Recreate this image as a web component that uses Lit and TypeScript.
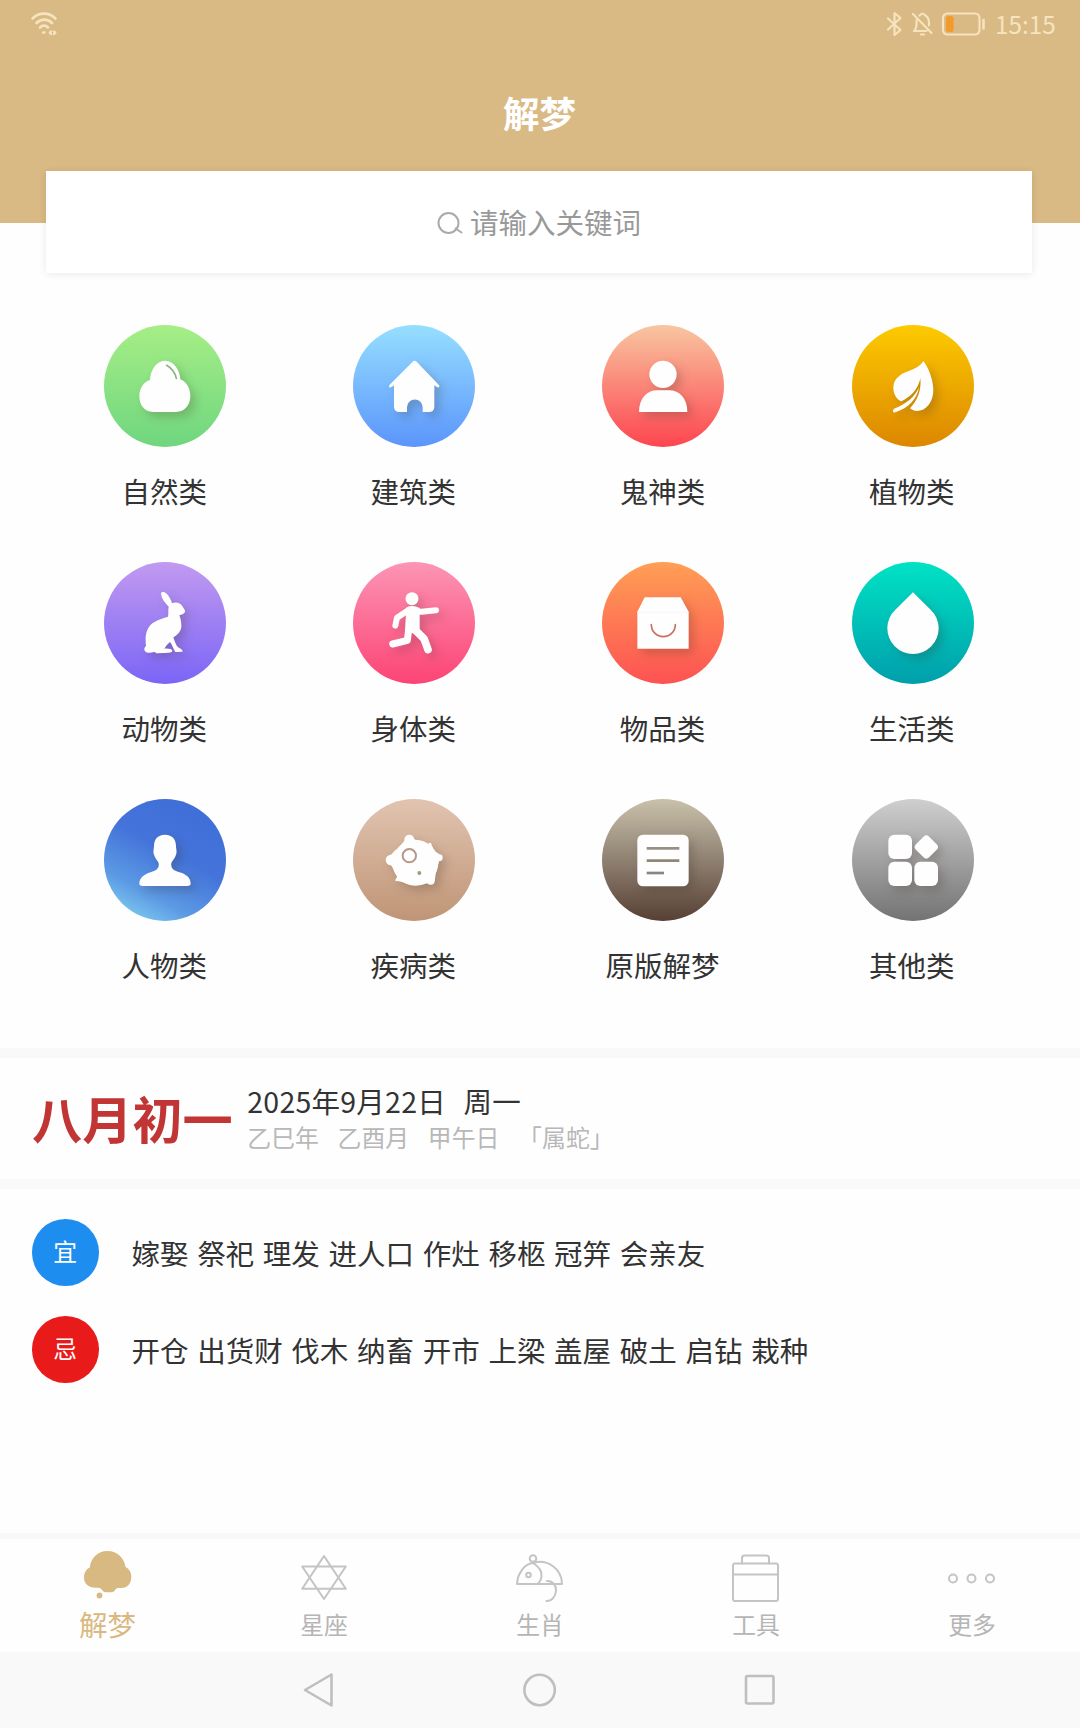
import { LitElement, html, svg, css } from "lit";
import { customElement, property } from "lit/decorators.js";
import { classMap } from "lit/directives/class-map.js";

const white = "#fefefe";

interface Category {
  label: string;
  tone: string;
  icon: unknown;
}

const categories: Category[] = [
  {
    label: "自然类",
    tone: "nature",
    icon: svg`
      <path fill=${white} d="M146 261C120 261 106 238 106 214C106 188 121 170 138 165C139 136 157 107 183 107C210 107 228 136 229 163C247 170 259 189 259 214C259 240 242 261 216 261Z"/>
      <path fill="none" stroke="#86b67e" stroke-width="5" stroke-linecap="round" d="M188 121C202 129 213 142 217 160"/>`,
  },
  {
    label: "建筑类",
    tone: "building",
    icon: svg`<path fill=${white} d="M179 110q6-5 12 0L257 179q4 5 0 8q-4 2-13-6V245Q244 261 227 261H209V247A23.5 23.5 0 0 0 162 247V261H140Q123 261 123 245V181q-9 8-13 6q-4-3 0-8Z"/>`,
  },
  {
    label: "鬼神类",
    tone: "spirit",
    icon: svg`
      <circle fill=${white} cx="183" cy="148" r="41"/>
      <path fill=${white} d="M111 261C111 220 135 196 165 196H202C232 196 256 220 256 261Z"/>`,
  },
  {
    label: "植物类",
    tone: "plant",
    icon: svg`
      <path fill=${white} d="M214 108C228 125 244 163 244 195C244 232 222 258 195 258C188 258 180 255 174 250C196 228 209 195 205 160C199 192 176 216 148 229C133 222 124 206 124 188C124 160 150 145 168 139C190 131 206 122 214 108Z"/>
      <path fill=${white} d="M201 186C190 214 165 236 126 251Q121 256 124 262Q128 263 134 260C168 249 196 222 201 186Z"/>`,
  },
  {
    label: "动物类",
    tone: "animal",
    icon: svg`<path fill=${white} d="M171 92C180 86 191 96 196 106C200 113 203 118 204 124C216 119 230 123 236 134C240 140 244 144 243 150C240 156 232 158 226 160C229 168 233 180 232 196C230 210 218 221 208 226C212 238 216 250 222 256C230 260 236 264 236 269L214 270C208 262 206 250 198 240C191 246 186 252 181 260C194 259 204 261 205 266C204 272 196 272 180 273L160 274C156 275 156 270 150 270C140 274 124 274 121 264C120 258 124 254 126 252C122 220 128 198 145 184C160 173 180 168 192 164C194 152 192 142 194 134C184 122 172 112 171 92Z"/>`,
  },
  {
    label: "身体类",
    tone: "body",
    icon: svg`
      <circle fill=${white} cx="177" cy="110" r="19.5"/>
      <path fill=${white} d="M160 137Q177 126 200 138V203L188 216L156 207Z"/>
      <g fill="none" stroke=${white} stroke-linecap="round" stroke-linejoin="round">
        <path stroke-width="18" d="M180 147L205 149L249 145M168 143L132 167L127 191"/>
        <path stroke-width="21" d="M167 203L163 235L119 246"/>
        <path stroke-width="23" d="M186 203L213 230L225 263"/>
      </g>`,
  },
  {
    label: "物品类",
    tone: "goods",
    icon: svg`
      <path fill=${white} d="M128 106H236L260 149V260H106V149Z"/>
      <path stroke="#f5f1f0" stroke-width="2" d="M106 151H260"/>
      <path fill="none" stroke="#c8705c" stroke-width="5" stroke-linecap="round" d="M148 188A36 36 0 0 0 220 188"/>`,
  },
  {
    label: "生活类",
    tone: "life",
    icon: svg`<path fill=${white} d="M183 91L236 143A77 77 0 1 1 130 143Z"/>`,
  },
  {
    label: "人物类",
    tone: "people",
    icon: svg`<path fill=${white} d="M183 107C206 107 216 122 216 142C216 148 219 156 217 164C214 176 206 184 202 192C200 206 206 214 224 219C246 225 260 236 260 254Q260 260 250 261H116Q106 260 106 254C106 236 122 225 142 219C160 214 166 206 164 192C160 184 152 176 149 164C147 156 150 148 150 142C150 122 160 107 183 107Z"/>`,
  },
  {
    label: "疾病类",
    tone: "illness",
    icon: svg`
      <g fill=${white}>
        <circle cx="187" cy="191" r="69"/>
        <circle cx="169" cy="122" r="15"/>
        <circle cx="114" cy="183" r="16"/>
        <circle cx="259" cy="176" r="10"/>
        <circle cx="233" cy="245" r="12"/>
        <circle cx="131" cy="243" r="4"/>
        <circle cx="231" cy="135" r="4"/>
        <path d="M155 124L184 120L190 128L145 137ZM114 167L130 150L125 216L114 199ZM233 132L244 155L259 166V186L250 210L245 247L205 257ZM129 240L134 228L160 252L134 246Z"/>
      </g>
      <circle fill="none" stroke="#b6978a" stroke-width="6" cx="169" cy="170" r="20"/>
      <circle fill="#a39b7c" cx="199" cy="222" r="6"/>`,
  },
  {
    label: "原版解梦",
    tone: "classic",
    icon: svg`
      <rect fill=${white} x="106" y="107" width="154" height="155" rx="17"/>
      <g stroke-width="8">
        <path stroke="#979087" d="M134 148H232"/>
        <path stroke="#8f8675" d="M134 185H232"/>
        <path stroke="#8c857f" d="M134 222H186"/>
      </g>`,
  },
  {
    label: "其他类",
    tone: "other",
    icon: svg`
      <g fill=${white}>
        <rect x="109" y="107" width="71" height="73" rx="18"/>
        <rect x="109" y="188" width="71" height="73" rx="18"/>
        <rect x="187" y="188" width="71" height="73" rx="18"/>
        <rect x="195" y="116" width="56" height="56" rx="12" transform="rotate(45 223 144)"/>
      </g>`,
  },
];

@customElement("category-tile")
class CategoryTile extends LitElement {
  @property({ attribute: false }) item!: Category;

  static styles = css`
    :host {
      display: flex;
      flex-direction: column;
      align-items: center;
      gap: 24px;
    }
    .disc {
      width: 122px;
      height: 122px;
      border-radius: 50%;
    }
    .disc svg {
      display: block;
      width: 122px;
      height: 122px;
      border-radius: 50%;
    }
    .glyph {
      filter: drop-shadow(14px 15px 15px rgba(60, 40, 30, 0.22));
    }
    .label {
      margin-right: 1.6px;
      font-size: 28.5px;
      line-height: 40px;
      color: #333;
      white-space: nowrap;
    }
    .nature { background: linear-gradient(#a6ee86, #6fd67f); }
    .building { background: linear-gradient(#96dfff, #5b95fb); }
    .spirit { background: linear-gradient(#f8c6a0, #fd4550); }
    .plant { background: linear-gradient(#fdca00, #dc8700); }
    .animal { background: linear-gradient(#c19af0, #7b65f6); }
    .body { background: linear-gradient(#fc95b5, #fc4475); }
    .goods { background: linear-gradient(#ff9f55, #fd5253); }
    .life { background: linear-gradient(#00e2c5, #009fab); }
    .people { background: linear-gradient(28deg, #84d3f1 5%, #5c9ae4 27%, #4474da 55%, #3f6cd8); }
    .illness { background: linear-gradient(#e1c4b0, #bf9576); }
    .classic { background: linear-gradient(#c9c1aa, #8f8172 50%, #573f34); }
    .other { background: linear-gradient(#cfcfcf, #737373); }
  `;

  render() {
    return html`
      <div class=${classMap({ disc: true, [this.item.tone]: true })}>
        <svg viewBox="0 0 366 366"><g class="glyph">${this.item.icon}</g></svg>
      </div>
      <span class="label">${this.item.label}</span>
    `;
  }
}

const tabs = [
  {
    label: "解梦",
    active: true,
    icon: svg`
      <path fill="#d9b982" d="M24.500 1C34.500 1 41.500 8.500 42.500 17C46.500 19 48.500 22.500 48.300 27.500C48 34 44 38 38.500 38C36 38 34.500 38 33.200 38.500C32 40 31.500 41.500 29.500 42.300H22C19.500 41.500 19 39 17.200 38.300C15 37.500 13.500 38 11 37.700C5 37 1 33.500 1 27.500C1 23 3 19 6.800 17.500C7.500 8.500 14.500 1 24.500 1Z"/>
      <circle fill="#d9b982" cx="16.500" cy="45.500" r="2.900"/>`,
  },
  {
    label: "星座",
    icon: svg`<path d="M25 6L46.800 38.800H3.200ZM25 49L3.200 16.500H46.800Z"/>`,
  },
  {
    label: "生肖",
    icon: svg`
      <circle cx="18" cy="8.500" r="3.300"/>
      <circle cx="13.500" cy="25" r="2.300"/>
      <path d="M2 34C2.500 23 10 13.500 18 13C23 16 27 20 26.500 26C26.300 29.500 24.500 32.500 22 34M18 13C32 8 47 19 47 34H2M32 31C38 30.500 41.500 36 41 41C40.500 46.500 37 51 31.500 51"/>`,
  },
  {
    label: "工具",
    icon: svg`
      <rect x="2" y="13.500" width="45" height="37.500" rx="2"/>
      <path d="M2 24.500H47M11 13.500V8Q11 5.500 13.500 5.500H35.500Q38 5.500 38 8V13.500"/>`,
  },
  {
    label: "更多",
    icon: svg`
      <circle cx="6" cy="28.500" r="4"/>
      <circle cx="24.500" cy="28.500" r="4"/>
      <circle cx="43" cy="28.500" r="4"/>`,
  },
];

@customElement("app-root")
class AppRoot extends LitElement {
  static styles = css`
    :host {
      display: flex;
      flex-direction: column;
      width: 1080px;
      height: 1728px;
      overflow: hidden;
      background: #fefefe;
      color: #333;
      font-family: "Noto Sans CJK SC", "Noto Sans", sans-serif;
    }
    .header {
      flex: none;
      height: 222.5px;
      background: #d9b984;
    }
    .status {
      display: flex;
      align-items: center;
      height: 48px;
      padding: 0 25px 0 30px;
      color: #f6e3bf;
    }
    .status svg {
      display: block;
      fill: none;
      stroke: currentColor;
      stroke-width: 2.2;
      stroke-linecap: round;
      stroke-linejoin: round;
    }
    .indicators {
      display: flex;
      align-items: center;
      margin-left: auto;
      gap: 8px;
    }
    .time {
      width: 60px;
      margin-left: 1px;
      font-size: 24.3px;
      line-height: 48px;
      white-space: nowrap;
    }
    .title {
      margin: 0 1px 0 0;
      padding-top: 41px;
      font-size: 36.5px;
      line-height: 48px;
      font-weight: 700;
      text-align: center;
      color: #fff;
    }
    .search {
      flex: none;
      display: flex;
      align-items: center;
      justify-content: center;
      gap: 7px;
      height: 102px;
      margin: -51.5px 48px 0 46px;
      background: #fff;
      box-shadow: 0 1px 8px rgba(0, 0, 0, 0.09);
      font-size: 28.5px;
      color: #999;
    }
    .search svg {
      display: block;
      margin-top: 2px;
    }
    .search span {
      line-height: 40px;
      margin-top: -1px;
    }
    .grid {
      flex: none;
      display: grid;
      grid-template-columns: repeat(4, 249.2px);
      grid-auto-rows: 186px;
      row-gap: 51px;
      height: 723px;
      padding: 52px 0 0 40.4px;
      box-sizing: content-box;
    }
    .rule {
      flex: none;
      height: 10px;
      background: #f9f9f9;
    }
    .calendar {
      flex: none;
      display: flex;
      align-items: center;
      gap: 14.5px;
      height: 121px;
      padding: 0 32px;
      box-sizing: border-box;
    }
    .lunar {
      font-size: 50.2px;
      line-height: 70px;
      font-weight: 700;
      color: #c13535;
      margin-top: -4px;
    }
    .dates {
      display: flex;
      flex-direction: column;
    }
    .solar {
      display: flex;
      gap: 17.5px;
      font-size: 28.5px;
      line-height: 36px;
      letter-spacing: 0.25px;
    }
    .stems {
      display: flex;
      gap: 18.6px;
      font-size: 23.9px;
      line-height: 36px;
      color: #b8b8b8;
    }
    .almanac {
      flex: 1;
      display: flex;
      flex-direction: column;
      gap: 30px;
      padding: 30px 32px 0;
    }
    .advice {
      display: flex;
      align-items: center;
      gap: 33px;
      height: 67px;
      font-size: 28.5px;
      word-spacing: 2.3px;
      white-space: nowrap;
    }
    .advice p {
      margin: 1px 0 0;
      line-height: 40px;
    }
    .badge {
      display: flex;
      align-items: center;
      justify-content: center;
      width: 66.5px;
      height: 66.5px;
      border-radius: 50%;
      color: #fff;
      font-size: 23.8px;
      line-height: 62px;
    }
    .badge span {
      margin-top: -3px;
    }
    .good { background: #1e8df0; }
    .bad { background: #e91a1a; }
    .tabs {
      flex: none;
      display: grid;
      grid-template-columns: repeat(5, 1fr);
      height: 119px;
      box-sizing: border-box;
      border-top: 6px solid #f8f8f8;
    }
    .tab {
      display: flex;
      flex-direction: column;
      align-items: center;
      padding-top: 11px;
      color: #b5b5b5;
      font-size: 23.8px;
      line-height: 36px;
    }
    .tab svg {
      display: block;
      width: 50px;
      height: 54px;
      margin-bottom: 1.5px;
      fill: none;
      stroke: #c4c4c4;
      stroke-width: 2;
      stroke-linejoin: round;
      stroke-linecap: round;
    }
    .tab.active {
      color: #d9b982;
      font-size: 28.5px;
    }
    .tab.active span {
      margin-right: 1px;
    }
    .tab.active svg {
      stroke: none;
    }
    .system {
      flex: none;
      display: flex;
      justify-content: center;
      align-items: center;
      gap: 184px;
      height: 76px;
      background: #f9f9f9;
    }
    .system svg {
      display: block;
      fill: none;
      stroke: #bfbfbf;
      stroke-width: 2.6;
      stroke-linejoin: round;
    }
  `;

  render() {
    return html`
      <header class="header">
        <div class="status">
          <svg width="28" height="26" viewBox="0 0 28 26">
            <path d="M2.500 7.500C9 1 19 1 25.500 7.500M6.500 12C11 7.500 17.500 7.500 22 12M10 16.500C12.500 13.800 15.500 13.800 18 16.500" stroke-width="2.600"/>
            <path d="M13 21.500H14.500M21 20.500L19.800 21.700L21 23M24 20.500L25.200 21.700L24 23" stroke-width="2.400"/>
          </svg>
          <div class="indicators">
            <svg width="17" height="26" viewBox="0 0 17 26">
              <path d="M2 7.500L14.500 19L8.500 24V2L14.500 7L2 18.500"/>
            </svg>
            <svg width="22" height="26" viewBox="0 0 22 26">
              <path d="M2 3L20.500 22M3 20H15.500M3 20C5 18 5.500 16 5.500 13V9M8.500 4.500C9.500 4 10 2.500 11.500 2.500C13 2.500 13.500 4 14.500 4.500C17 6 18 8.500 18 12V14.500M10 23.500H13"/>
            </svg>
            <svg width="45" height="26" viewBox="0 0 45 26">
              <rect x="2" y="2.500" width="36.500" height="21" rx="4.500"/>
              <path d="M42.500 9V17.500" stroke-width="2.600"/>
              <rect x="5" y="5" width="7.500" height="16" rx="2.500" fill="#f39a2b" stroke="none"/>
            </svg>
            <span class="time">15:15</span>
          </div>
        </div>
        <h1 class="title">解梦</h1>
      </header>

      <div class="search">
        <svg width="26" height="24" viewBox="0 0 26 24" fill="none" stroke="#aaa" stroke-width="2" stroke-linecap="round">
          <circle cx="11.500" cy="12" r="10"/>
          <path d="M18.500 17.500L24.500 21.500"/>
        </svg>
        <span>请输入关键词</span>
      </div>

      <section class="grid">
        ${categories.map((item) => html`<category-tile .item=${item}></category-tile>`)}
      </section>

      <div class="rule"></div>
      <section class="calendar">
        <div class="lunar">八月初一</div>
        <div class="dates">
          <div class="solar"><span>2025年9月22日</span><span>周一</span></div>
          <div class="stems">
            <span>乙巳年</span><span>乙酉月</span><span>甲午日</span><span>「属蛇」</span>
          </div>
        </div>
      </section>
      <div class="rule"></div>

      <section class="almanac">
        <div class="advice">
          <div class="badge good"><span>宜</span></div>
          <p>嫁娶 祭祀 理发 进人口 作灶 移柩 冠笄 会亲友</p>
        </div>
        <div class="advice">
          <div class="badge bad"><span>忌</span></div>
          <p>开仓 出货财 伐木 纳畜 开市 上梁 盖屋 破土 启钻 栽种</p>
        </div>
      </section>

      <nav class="tabs">
        ${tabs.map(
          (tab) => html`
            <div class=${classMap({ tab: true, active: !!tab.active })}>
              <svg viewBox="0 0 50 54">${tab.icon}</svg>
              <span>${tab.label}</span>
            </div>
          `,
        )}
      </nav>

      <footer class="system">
        <svg width="36" height="36" viewBox="0 0 36 36"><path d="M3 18L29.500 2.500V33.500Z"/></svg>
        <svg width="36" height="36" viewBox="0 0 36 36"><circle cx="17.600" cy="18" r="15.200"/></svg>
        <svg width="36" height="36" viewBox="0 0 36 36"><rect x="4" y="4" width="27.500" height="27.500" rx="1.500"/></svg>
      </footer>
    `;
  }
}
